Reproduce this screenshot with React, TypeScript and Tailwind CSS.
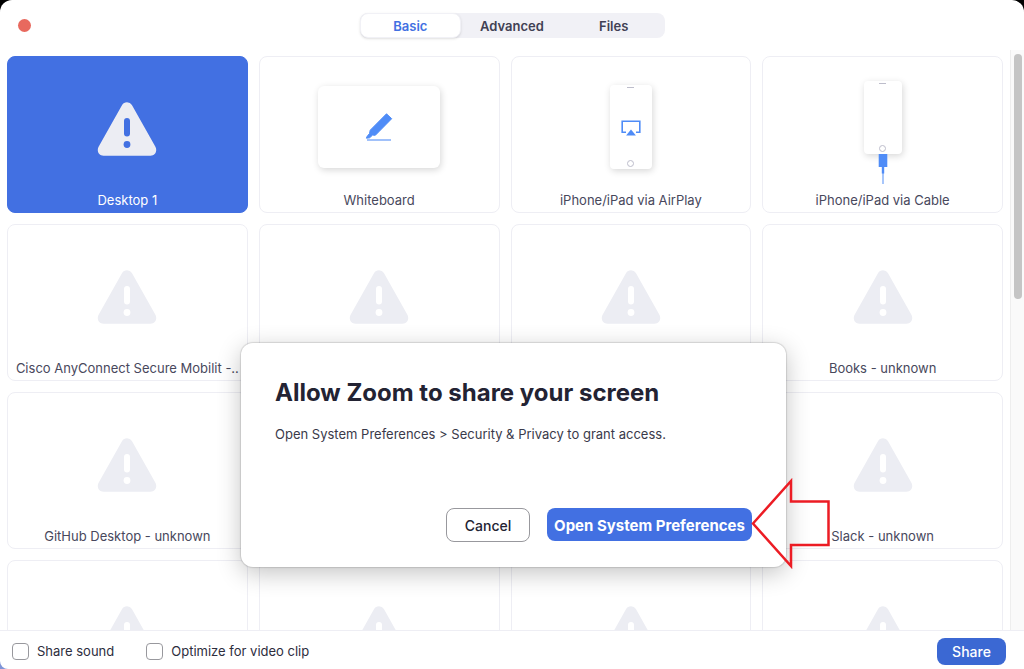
import { useState } from 'react'
import type { ReactNode } from 'react'

const tabs = ['Basic', 'Advanced', 'Files']

type Source = {
  id: string
  label: string
  art: ReactNode
}

const WarningIcon = ({ selected = false }: { selected?: boolean }) => (
  <svg className="h-[54px] w-[60px]" viewBox="0 0 60 54" aria-hidden="true">
    <path
      d="M25.1 3.1a5.600 5.600 0 0 1 9.800 0l23.500 41.700c2.200 4.200-.2 8.900-4.900 8.900h-47c-4.700 0-7.100-4.700-4.900-8.900z"
      fill="#ecedf3"
    />
    <rect x="27" y="16" width="6" height="18.500" rx="3" fill={selected ? '#4270e2' : '#fff'} />
    <circle cx="30" cy="42.500" r="3.400" fill={selected ? '#4270e2' : '#fff'} />
  </svg>
)

const WhiteboardArt = () => (
  <div className="mb-1 flex h-[82px] w-[122px] items-center justify-center rounded-md bg-white shadow-[1px_2px_7px_rgba(0,0,0,0.16)]">
    <svg className="h-7 w-7" viewBox="0 0 28 28" aria-hidden="true">
      <path
        d="M21.500 .8 26.700 5.700 13.800 18.800 10.300 22.300 7.600 22.100 4.600 24.800 1.400 25.200 2 23.600 4.500 20.500 5.200 17.200z"
        fill="#4f8cf7"
        stroke="#4f8cf7"
        strokeLinejoin="round"
      />
      <path d="M2 27h24" stroke="#6f9ff8" strokeWidth="1.300" />
    </svg>
  </div>
)

const AirPlayArt = () => (
  <div className="mb-1 flex h-[84px] w-[42px] flex-col items-center justify-between rounded bg-white py-0.5 shadow-[1px_2px_7px_rgba(0,0,0,0.16)]">
    <div className="h-px w-[7px] bg-[#bdbdcb]" />
    <svg className="mt-2 h-4 w-5" viewBox="0 0 20 16" aria-hidden="true">
      <path d="M5 12.200H1.200V1.200H18.800V12.200H15" fill="none" stroke="#4f8cf7" strokeWidth="1.600" />
      <path d="M10 9.500 14.900 15.500H5.100z" fill="#4f8cf7" />
    </svg>
    <div className="size-[7px] rounded-full border border-[#bdbdcb]" />
  </div>
)

const CableArt = () => (
  <div className="mt-2 flex flex-col items-center">
    <div className="flex h-[73px] w-[38px] flex-col items-center justify-between rounded bg-white py-0.5 shadow-[1px_2px_7px_rgba(0,0,0,0.16)]">
      <div className="h-px w-[7px] bg-[#bdbdcb]" />
      <div className="size-[7px] rounded-full border border-[#bdbdcb]" />
    </div>
    <svg className="relative h-[30px] w-[10px]" viewBox="0 0 10 30" aria-hidden="true">
      <path d="M.7 0h8.600v13H6.200v6.500h-.7V30h-1V19.500h-.7V13H.7z" fill="#4f8cf7" />
    </svg>
  </div>
)

const sources: Source[] = [
  { id: 'desktop-1', label: 'Desktop 1', art: <WarningIcon selected /> },
  { id: 'whiteboard', label: 'Whiteboard', art: <WhiteboardArt /> },
  { id: 'airplay', label: 'iPhone/iPad via AirPlay', art: <AirPlayArt /> },
  { id: 'cable', label: 'iPhone/iPad via Cable', art: <CableArt /> },
  { id: 'cisco', label: 'Cisco AnyConnect Secure Mobilit -..', art: <WarningIcon /> },
  { id: 'window-2', label: '', art: <WarningIcon /> },
  { id: 'window-3', label: '', art: <WarningIcon /> },
  { id: 'books', label: 'Books - unknown', art: <WarningIcon /> },
  { id: 'github', label: 'GitHub Desktop - unknown', art: <WarningIcon /> },
  { id: 'window-6', label: '', art: <WarningIcon /> },
  { id: 'window-7', label: '', art: <WarningIcon /> },
  { id: 'slack', label: 'Slack - unknown', art: <WarningIcon /> },
  { id: 'window-9', label: '', art: <WarningIcon /> },
  { id: 'window-10', label: '', art: <WarningIcon /> },
  { id: 'window-11', label: '', art: <WarningIcon /> },
  { id: 'window-12', label: '', art: <WarningIcon /> },
]

const SourceCard = ({ source, selected }: { source: Source; selected: boolean }) => (
  <button
    type="button"
    aria-label={source.label || 'Window'}
    aria-pressed={selected}
    className={`flex h-[157px] min-w-0 flex-col rounded-lg border text-[13px] ${
      selected ? 'border-[#4270e2] bg-[#4270e2] text-white' : 'border-[#eeeef4] bg-white text-[#48485c]'
    }`}
  >
    <span className="flex min-h-0 w-full flex-1 items-center justify-center pt-3">{source.art}</span>
    <span className="h-6 w-full truncate px-[3px] leading-6">{source.label}</span>
  </button>
)

const PermissionDialog = () => (
  <div
    role="dialog"
    aria-labelledby="permission-title"
    className="absolute top-[343px] left-[241px] flex h-[224px] w-[545px] flex-col rounded-xl bg-white px-[34px] pt-8 pb-[25px] shadow-[0_0_1px_1px_rgba(0,0,0,0.12),0_6px_24px_rgba(0,0,0,0.24)]"
  >
    <h1 id="permission-title" className="text-2xl leading-9 font-bold text-[#232333]">
      Allow Zoom to share your screen
    </h1>
    <p className="mt-[13px] text-[13px] leading-5 text-[#3a3a4a]">
      Open System Preferences &gt; Security &amp; Privacy to grant access.
    </p>
    <div className="mt-auto flex justify-end gap-[17px]">
      <button
        type="button"
        className="h-[34px] w-[84px] rounded-lg border border-[#98989d] pt-0.5 text-sm font-medium text-[#232333]"
      >
        Cancel
      </button>
      <button
        type="button"
        className="h-[33px] w-[205px] rounded-lg bg-[#4270e2] pt-[3px] text-[15px] font-bold whitespace-nowrap text-white"
      >
        Open System Preferences
      </button>
    </div>
    <svg
      className="pointer-events-none absolute top-[134px] left-[510px] h-[92px] w-[80px]"
      viewBox="0 0 80 92"
      aria-hidden="true"
    >
      <path
        d="M2 46.500 40 4V24.500H77.500V68H40V89z"
        fill="none"
        stroke="#ec1c24"
        strokeWidth="2.500"
      />
    </svg>
  </div>
)

const CheckOption = ({ id, label }: { id: string; label: string }) => (
  <div className="flex items-center gap-2">
    <input
      id={id}
      type="checkbox"
      className="size-[17px] appearance-none rounded border border-[#98989d] bg-white checked:bg-[#4270e2]"
    />
    <label htmlFor={id}>{label}</label>
  </div>
)

export default function App() {
  const [activeTab, setActiveTab] = useState('Basic')

  return (
    <div className="h-screen bg-linear-to-b from-black to-[#7f95d8] font-['Inter',sans-serif]">
      <div className="relative flex h-full flex-col overflow-hidden rounded-t-xl rounded-bl-lg bg-white">
        <header className="grid h-[50px] shrink-0 grid-cols-[1fr_auto_1fr] items-center px-[18px]">
          <button type="button" aria-label="Close" className="size-[13px] rounded-full bg-[#e8695e]" />
          <div role="tablist" className="flex h-[25px] w-[305px] rounded-lg bg-[#f1f1f6]">
            {tabs.map((tab) => (
              <button
                key={tab}
                type="button"
                role="tab"
                aria-selected={tab === activeTab}
                onClick={() => setActiveTab(tab)}
                className={`flex-1 rounded-lg border pt-[3px] text-[13px] font-semibold ${
                  tab === activeTab
                    ? 'border-[#f1f1f6] bg-white text-[#4270e2] shadow-sm'
                    : 'border-transparent text-[#414154]'
                }`}
              >
                {tab}
              </button>
            ))}
          </div>
        </header>

        <div className="flex min-h-0 flex-1">
          <main className="min-w-0 flex-1 overflow-hidden px-[7px] pt-1.5">
            <div className="grid grid-cols-4 gap-[11px]">
              {sources.map((source) => (
                <SourceCard key={source.id} source={source} selected={source.id === 'desktop-1'} />
              ))}
            </div>
          </main>
          <div className="flex w-[14px] justify-center border-l border-[#eeeeee] bg-[#fafafa] pt-1">
            <div className="h-[245px] w-2 rounded-full bg-[#c5c5c5]" />
          </div>
        </div>

        <footer className="flex h-[39px] shrink-0 items-center gap-8 border-t border-[#eeeef4] pt-[3px] pr-[18px] pl-3 text-[13px] text-[#2d2d3d]">
          <CheckOption id="share-sound" label="Share sound" />
          <CheckOption id="optimize-video" label="Optimize for video clip" />
          <button type="button" className="ml-auto h-[27px] w-[69px] rounded-lg bg-[#3b68d3] text-sm font-medium text-white">
            Share
          </button>
        </footer>

        <PermissionDialog />
      </div>
    </div>
  )
}
